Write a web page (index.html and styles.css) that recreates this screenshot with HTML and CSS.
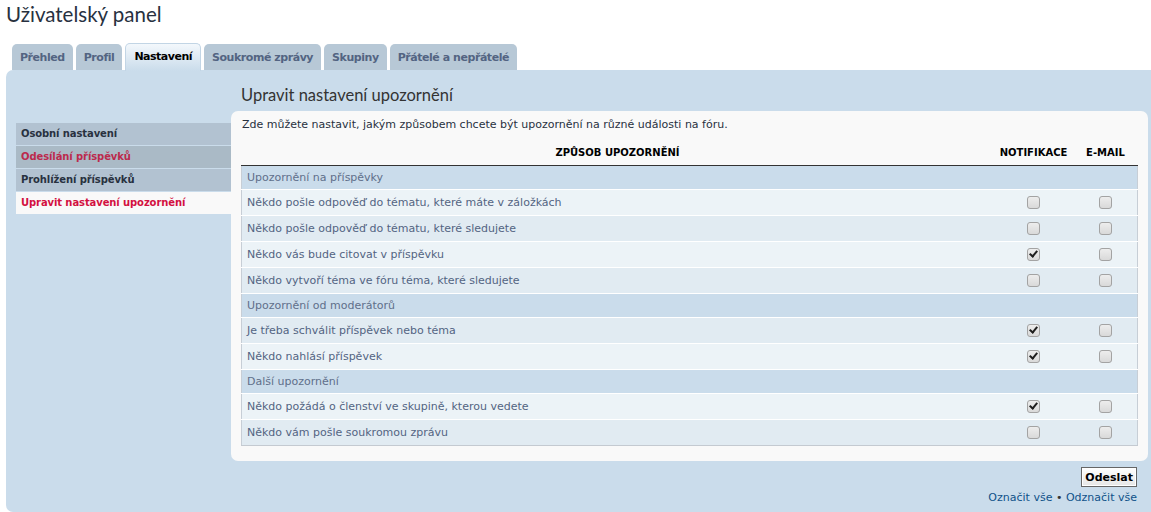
FILE: index.html
```html
<!DOCTYPE html>
<html lang="cs">
<head>
<meta charset="utf-8">
<title>Uživatelský panel</title>
<link rel="stylesheet" href="styles.css">
</head>
<body>
<div class="page">
  <h2 class="title">Uživatelský panel</h2>
  <ul class="tabs">
    <li class="tab">Přehled</li>
    <li class="tab">Profil</li>
    <li class="tab active">Nastavení</li>
    <li class="tab">Soukromé zprávy</li>
    <li class="tab">Skupiny</li>
    <li class="tab">Přátelé a nepřátelé</li>
  </ul>
  <div class="panel">
    <div class="cp-menu">
      <ul class="nav">
        <li><a href="#">Osobní nastavení</a></li>
        <li class="hover"><a href="#">Odesílání příspěvků</a></li>
        <li><a href="#">Prohlížení příspěvků</a></li>
        <li class="active"><a href="#">Upravit nastavení upozornění</a></li>
      </ul>
    </div>
    <div class="cp-main">
      <h2 class="main-h">Upravit nastavení upozornění</h2>
      <div class="box">
        <p class="intro">Zde můžete nastavit, jakým způsobem chcete být upozornění na různé události na fóru.</p>
        <table class="table1">
          <thead>
            <tr>
              <th class="c-name">Způsob upozornění</th>
              <th class="c-notif">Notifikace</th>
              <th class="c-mail">E-mail</th>
            </tr>
          </thead>
          <tbody>
            <tr class="sec"><td colspan="3">Upozornění na příspěvky</td></tr>
            <tr class="bg1"><td>Někdo pošle odpověď do tématu, které máte v záložkách</td><td class="cc"><input type="checkbox" class="cb"></td><td class="cc"><input type="checkbox" class="cb"></td></tr>
            <tr class="bg2"><td>Někdo pošle odpověď do tématu, které sledujete</td><td class="cc"><input type="checkbox" class="cb"></td><td class="cc"><input type="checkbox" class="cb"></td></tr>
            <tr class="bg1"><td>Někdo vás bude citovat v příspěvku</td><td class="cc"><input type="checkbox" class="cb" checked></td><td class="cc"><input type="checkbox" class="cb"></td></tr>
            <tr class="bg2"><td>Někdo vytvoří téma ve fóru téma, které sledujete</td><td class="cc"><input type="checkbox" class="cb"></td><td class="cc"><input type="checkbox" class="cb"></td></tr>
            <tr class="sec"><td colspan="3">Upozornění od moderátorů</td></tr>
            <tr class="bg2"><td>Je třeba schválit příspěvek nebo téma</td><td class="cc"><input type="checkbox" class="cb" checked></td><td class="cc"><input type="checkbox" class="cb"></td></tr>
            <tr class="bg1"><td>Někdo nahlásí příspěvek</td><td class="cc"><input type="checkbox" class="cb" checked></td><td class="cc"><input type="checkbox" class="cb"></td></tr>
            <tr class="sec"><td colspan="3">Další upozornění</td></tr>
            <tr class="bg1"><td>Někdo požádá o členství ve skupině, kterou vedete</td><td class="cc"><input type="checkbox" class="cb" checked></td><td class="cc"><input type="checkbox" class="cb"></td></tr>
            <tr class="bg2 last"><td>Někdo vám pošle soukromou zprávu</td><td class="cc"><input type="checkbox" class="cb"></td><td class="cc"><input type="checkbox" class="cb"></td></tr>
          </tbody>
        </table>
      </div>
      <div class="actions">
        <button type="button" class="btn">Odeslat</button>
        <div class="marks"><a href="#">Označit vše</a> <span class="bull">•</span> <a href="#">Odznačit vše</a></div>
      </div>
    </div>
  </div>
</div>
</body>
</html>
```
FILE: styles.css
```css
html, body {
  margin: 0;
  padding: 0;
}
body {
  background: #ffffff;
  font-family: "DejaVu Sans", Verdana, sans-serif;
  font-size: 11px;
  color: #536482;
  overflow: hidden;
}
.page {
  width: 1158px;
  padding-left: 6px;
  box-sizing: border-box;
}
.title {
  margin: 0;
  font-family: Lato, "Open Sans", sans-serif;
  font-weight: normal;
  font-size: 20.5px;
  line-height: 28px;
  color: #28313F;
}
.tabs {
  display: flex;
  align-items: flex-end;
  gap: 3px;
  margin: 15px 0 0;
  padding: 0 0 0 6px;
  list-style: none;
  height: 27px;
}
.tab {
  height: 26px;
  box-sizing: border-box;
  padding: 0 8px;
  border-radius: 5px 5px 0 0;
  background: #B7C8D6;
  color: #536482;
  font-weight: bold;
  font-size: 11px;
  letter-spacing: -0.45px;
  display: flex;
  align-items: center;
}
.tab.active {
  height: 28px;
  margin-bottom: -1px;
  background: linear-gradient(#F3F8FC, #CADCEB);
  border: 1px solid #C2D5E5;
  border-bottom: none;
  color: #000000;
  padding: 0 8px 2px;
  letter-spacing: -0.5px;
}
.panel {
  display: flex;
  background: #CADCEB;
  border-radius: 7px;
  padding: 15px 10px 7px;
}
.cp-menu {
  width: 215px;
  margin-top: 38px;
}
.nav {
  list-style: none;
  margin: 0;
  padding: 0;
}
.nav li {
  margin-bottom: 1px;
}
.nav a {
  display: block;
  height: 22px;
  line-height: 22px;
  padding-left: 5px;
  font-size: 10px;
  letter-spacing: -0.1px;
  font-weight: bold;
  color: #28313F;
  text-decoration: none;
  background-color: #B2C2D1;
  background-image: linear-gradient(to left, #B2C2D1 50%, rgba(178, 194, 209, 0) 100%);
}
.nav .hover a {
  background: #AABAC6;
  color: #BC2A4D;
}
.nav .active a {
  background: #F9F9F9;
  color: #D31141;
}
.cp-main {
  flex: 1;
}
.main-h {
  margin: 0 0 6px 10px;
  font-family: Lato, "Open Sans", sans-serif;
  font-weight: normal;
  font-size: 16.5px;
  line-height: 20px;
  color: #333333;
}
.box {
  background: #F9F9F9;
  border-radius: 7px;
  padding: 7px 10px 15px;
}
.intro {
  margin: 0 0 8px 1px;
  line-height: 14px;
  color: #28313F;
}
.table1 {
  width: 100%;
  border-collapse: collapse;
}
.table1 th {
  padding: 6px 5px 5px;
  line-height: 14px;
  font-size: 10px;
  font-weight: bold;
  text-transform: uppercase;
  color: #000000;
  text-align: center;
  border-bottom: 1px solid #333333;
}
.c-notif {
  width: 70px;
}
.c-mail {
  width: 54px;
}
.table1 td {
  padding: 0 5px;
  height: 26px;
  box-sizing: border-box;
  border-bottom: 1px solid #FFFFFF;
  color: #536482;
}
.table1 td:first-child {
  border-left: 1px solid #C7CED6;
}
.table1 td:last-child {
  border-right: 1px solid #C7CED6;
}
.table1 .last td {
  border-bottom: 1px solid #C4CAD1;
}
.table1 .sec td {
  height: 24px;
  background: #CADCEB;
  color: #5F6F8A;
}
.table1 .bg1 td {
  background: #ECF3F7;
}
.table1 .bg2 td {
  background: #E1EBF2;
}
.table1 .cc {
  text-align: center;
}
.cb {
  -webkit-appearance: none;
  appearance: none;
  position: relative;
  display: inline-block;
  vertical-align: middle;
  width: 13px;
  height: 13px;
  margin: 0;
  box-sizing: border-box;
  border: 1px solid #A3A3A3;
  border-radius: 3px;
  background: linear-gradient(#EDEDED, #D9D9D9);
}
.cb:checked::after {
  content: "";
  position: absolute;
  left: 3px;
  top: 0px;
  width: 3px;
  height: 6px;
  border: solid #1E1E1E;
  border-width: 0 2px 2px 0;
  transform: rotate(40deg);
}
.actions {
  display: flex;
  flex-direction: column;
  align-items: flex-end;
  padding-right: 11px;
  padding-top: 6px;
}
.btn {
  height: 20px;
  padding: 0 3px;
  font-family: "DejaVu Sans", Verdana, sans-serif;
  font-size: 11px;
  font-weight: bold;
  color: #000000;
  border: 1px solid #666666;
  background: linear-gradient(#FFFFFF, #E6E6E6);
  box-shadow: inset 0 0 0 1px #FFFFFF;
  cursor: pointer;
}
.marks {
  margin-top: 4px;
  line-height: 14px;
}
.marks a {
  color: #105289;
  text-decoration: none;
}
.bull {
  color: #333333;
}
```
